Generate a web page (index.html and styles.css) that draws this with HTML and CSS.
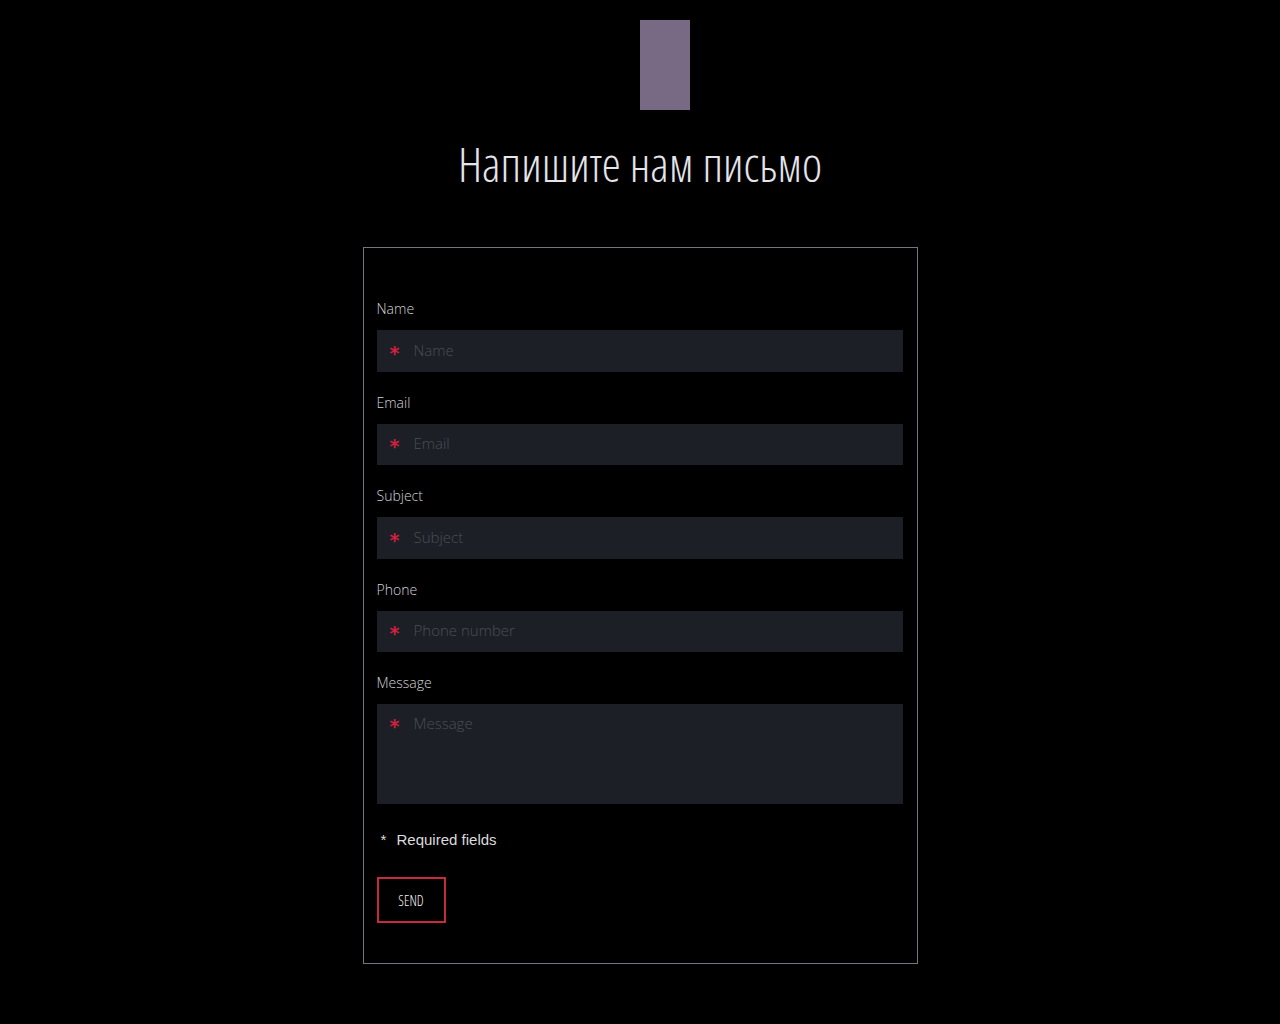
FILE: index.html
```html
<!DOCTYPE html>
<html lang="ru">
<head>
<meta charset="utf-8">
<title>Напишите нам письмо</title>
<link rel="stylesheet" href="styles.css">
</head>
<body>
<div class="page">
  <div class="logo"></div>
  <h1 class="title">Напишите нам письмо</h1>
  <form class="form-box">
    <div class="group">
      <label class="label">Name</label>
      <div class="field"><span class="req">*</span><span class="ph">Name</span></div>
    </div>
    <div class="group">
      <label class="label">Email</label>
      <div class="field"><span class="req">*</span><span class="ph">Email</span></div>
    </div>
    <div class="group">
      <label class="label">Subject</label>
      <div class="field"><span class="req">*</span><span class="ph">Subject</span></div>
    </div>
    <div class="group">
      <label class="label">Phone</label>
      <div class="field"><span class="req">*</span><span class="ph">Phone number</span></div>
    </div>
    <div class="group">
      <label class="label">Message</label>
      <div class="field area"><span class="req">*</span><span class="ph">Message</span></div>
    </div>
    <div class="required"><span class="star">*</span>Required fields</div>
    <button type="button" class="send">SEND</button>
  </form>
</div>
</body>
</html>
```
FILE: styles.css
```css
html, body {
  margin: 0;
  background: #000;
}
.page {
  display: flex;
  flex-direction: column;
  align-items: center;
  padding-top: 20px;
}
.logo {
  width: 50px;
  height: 90px;
  margin-left: 50px;
  background: #786a85;
}
.title {
  margin: 26px 0 0 0;
  height: 80px;
  font-family: "Open Sans", "DejaVu Sans Condensed", sans-serif;
  font-stretch: 75%;
  font-weight: 300;
  font-size: 48px;
  line-height: 56px;
  color: #e4e4ea;
  letter-spacing: 0.05px;
}
.form-box {
  margin-top: 31px;
  width: 526px;
  border: 1px solid #77737f;
  padding: 51px 14px 40px 13px;
  display: flex;
  flex-direction: column;
  font-family: "Open Sans", sans-serif;
}
.group {
  display: flex;
  flex-direction: column;
  margin-bottom: 21px;
}
.label {
  font-size: 14px;
  font-weight: 300;
  line-height: 20px;
  color: #d2d2d6;
  margin-bottom: 11px;
}
.field {
  height: 41.5px;
  background: #1c1f26;
  display: flex;
  align-items: center;
  box-sizing: border-box;
  padding-left: 13px;
}
.field.area {
  height: 100px;
  align-items: flex-start;
  padding-top: 9px;
}
.req {
  color: #d0203f;
  font-family: "DejaVu Sans", sans-serif;
  font-weight: bold;
  font-size: 19px;
  line-height: 22px;
  width: 24px;
  position: relative;
  top: 2px;
}
.ph {
  font-size: 15px;
  font-weight: 300;
  color: #4b4e57;
  line-height: 22px;
  position: relative;
  top: -1px;
}
.required {
  margin-top: 6px;
  font-family: "Liberation Sans", Arial, sans-serif;
  font-size: 15px;
  line-height: 18px;
  color: #dcdcdc;
  display: flex;
  align-items: center;
}
.star {
  width: 16px;
  margin-left: 4px;
  font-size: 15px;
  color: #ddd;
}
.send {
  margin-top: 28px;
  align-self: flex-start;
  width: 69px;
  height: 46px;
  background: transparent;
  border: 2px solid #c62a3c;
  color: #f0f0f0;
  font-family: "Open Sans", "DejaVu Sans Condensed", sans-serif;
  font-stretch: 75%;
  font-weight: 300;
  font-size: 14px;
  padding: 0;
  cursor: pointer;
}
```
